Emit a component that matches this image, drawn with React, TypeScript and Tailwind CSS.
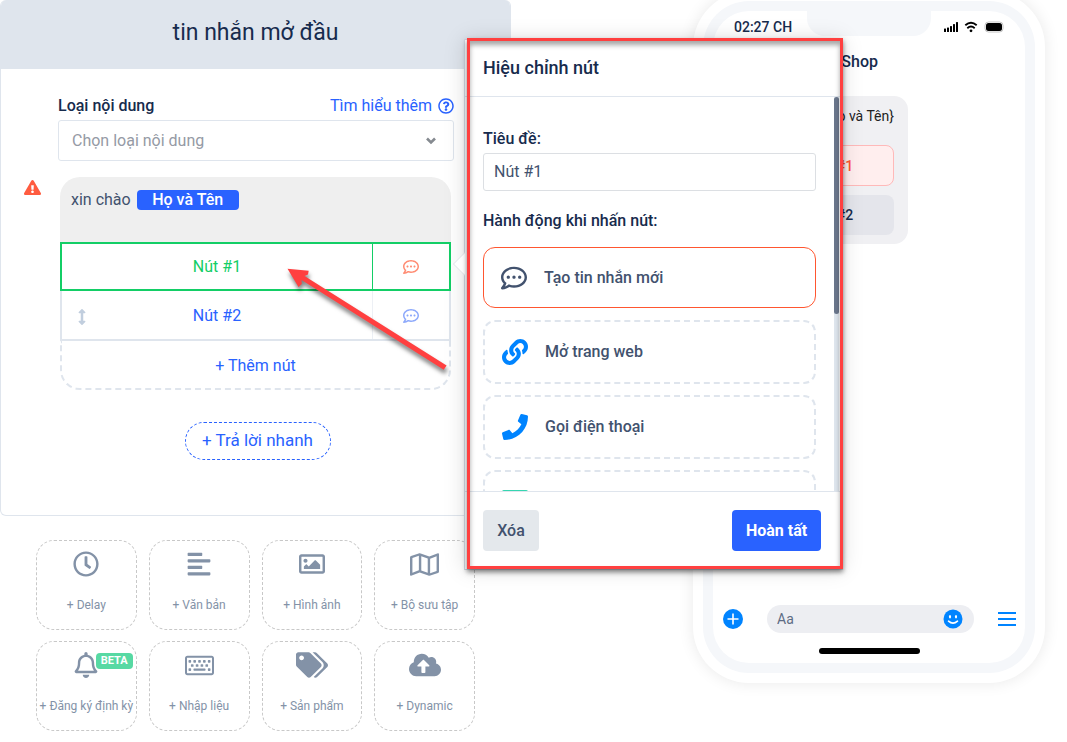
import React from "react";
import {
  FaAlignLeft,
  FaArrowsAltV,
  FaCloudUploadAlt,
  FaExclamationTriangle,
  FaLink,
  FaPhone,
  FaRegBell,
  FaRegClock,
  FaRegCommentDots,
  FaRegImage,
  FaRegKeyboard,
  FaRegMap,
  FaRegQuestionCircle,
  FaTags,
} from "react-icons/fa";

const blocks = [
  { label: "+ Delay", icon: <FaRegClock size={26} /> },
  { label: "+ Văn bản", icon: <FaAlignLeft size={26} /> },
  { label: "+ Hình ảnh", icon: <FaRegImage size={26} /> },
  { label: "+ Bộ sưu tập", icon: <FaRegMap size={29} /> },
  { label: "+ Đăng ký định kỳ", icon: <FaRegBell size={26} />, beta: true },
  { label: "+ Nhập liệu", icon: <FaRegKeyboard size={29} /> },
  { label: "+ Sản phẩm", icon: <FaTags size={32} /> },
  { label: "+ Dynamic", icon: <FaCloudUploadAlt size={32} /> },
];

function MessageCard() {
  return (
    <section className="flex h-[516px] flex-col overflow-hidden rounded-md border border-t-0 border-[#dfe5ed]">
      <h1 className="flex h-[69px] shrink-0 items-center justify-center bg-[#dfe5ed] pb-0.5 text-[23px] text-[#172b4d]">
        tin nhắn mở đầu
      </h1>
      <div className="flex flex-col px-[57px] pt-6">
        <div className="-mr-px flex h-[27px] items-center justify-between pb-0.5 text-base">
          <label htmlFor="content-type" className="font-medium text-[#172b4d]">
            Loại nội dung
          </label>
          <a href="#learn" className="flex items-center gap-1.5 text-[#2962ff]">
            Tìm hiểu thêm <FaRegQuestionCircle size={16} />
          </a>
        </div>
        <div className="relative -mr-px">
          <select
            id="content-type"
            className="block h-[41px] w-full appearance-none rounded-[3px] border border-[#dfe5ed] bg-white px-[13px] text-base text-[#959aa5]"
          >
            <option>Chọn loại nội dung</option>
          </select>
          <svg className="pointer-events-none absolute top-[17px] right-[17px] h-2 w-3" viewBox="0 0 12 8" fill="none">
            <path d="M2 1.5 6 5.5 10 1.5" stroke="#858a90" strokeWidth="2.6" />
          </svg>
        </div>

        <div className="relative mt-4 mr-0.5 ml-0.5">
          <FaExclamationTriangle size={17} color="#ff5c40" className="absolute top-0.5 -left-9" />
          <div className="flex h-[65px] items-start gap-1.5 rounded-t-[20px] bg-[#efefef] px-[11px] pt-[13px] text-base leading-5 text-[#42526e]">
            <span>xin chào</span>
            <span className="w-[102px] rounded bg-[#2962ff] text-center font-medium text-white">Họ và Tên</span>
          </div>
          <div className="flex h-[49px] border-2 border-[#13ce66] text-base">
            <button className="flex-1 text-[#13ce66]">Nút #1</button>
            <button aria-label="Hành động nút 1" className="flex w-[77px] items-center justify-center border-l border-[#13ce66] text-[#ff8c73]">
              <FaRegCommentDots size={16} />
            </button>
          </div>
          <div className="flex h-[50px] border-2 border-t-0 border-[#dfe5ed] text-base">
            <button className="relative flex-1 pt-0.5 text-[#2962ff]">
              <FaArrowsAltV size={16} color="#c1cede" className="absolute top-[18px] left-3" />
              Nút #2
            </button>
            <button aria-label="Hành động nút 2" className="flex w-[77px] items-center justify-center border-l border-[#edf0f5] pt-0.5 text-[#8da9fb]">
              <FaRegCommentDots size={16} />
            </button>
          </div>
          <button className="h-[49px] w-full rounded-b-[20px] border-2 border-t-0 border-dashed border-[#dfe5ed] pt-0.5 text-base text-[#2962ff]">
            + Thêm nút
          </button>
        </div>
        <div className="mt-8 flex justify-center pl-1">
          <button className="h-[38px] w-[146px] rounded-full border border-dashed border-[#2962ff] text-[17px] text-[#2962ff]">
            + Trả lời nhanh
          </button>
        </div>
      </div>
    </section>
  );
}

function BlockGrid() {
  return (
    <div className="mt-6 grid grid-cols-4 gap-x-3 gap-y-[11px] px-9">
      {blocks.map((b) => (
        <button
          key={b.label}
          className="relative flex h-[90px] flex-col items-center rounded-[18px] border border-dashed border-[#c8c8c8] text-xs text-[#8392a7]"
        >
          <span className="flex h-[46px] items-center">{b.icon}</span>
          <span className="mt-2.5 whitespace-nowrap">{b.label}</span>
          {b.beta && (
            <span className="absolute top-[11px] right-[3px] rounded bg-[#57d9a3] px-[5px] text-[11px] leading-4 font-bold text-white">
              BETA
            </span>
          )}
        </button>
      ))}
    </div>
  );
}

function Phone() {
  return (
    <aside className="-mt-[9px] mr-[22px] ml-auto h-[692px] w-[352px] shrink-0 rounded-[56px] bg-white p-2.5 shadow-[0_0_16px_rgba(0,0,0,0.09)]">
      <div className="h-full rounded-[46px] bg-[#f5f7fa] p-2.5">
        <div className="relative flex h-full flex-col rounded-[36px] bg-white">
          <div className="absolute top-0 left-[94px] h-[25px] w-[124px] rounded-b-[18px] bg-[#f5f7fa]" />
          <div className="flex h-8 items-center justify-between px-[21px] text-sm font-medium text-[#172b4d]">
            <span>02:27 CH</span>
            <svg width="60" height="12" viewBox="0 0 60 12">
              <g fill="#000">
                <rect x="0" y="7.500" width="2" height="3.500" rx="0.500" />
                <rect x="3" y="6.500" width="2" height="4.500" rx="0.500" />
                <rect x="6" y="5" width="2" height="6" rx="0.500" />
                <rect x="9" y="3" width="2" height="8" rx="0.500" />
                <rect x="12" y="1" width="2" height="10" rx="0.500" />
                <rect x="42" y="2" width="16" height="8" rx="2.500" />
                <circle cx="27" cy="9.800" r="1.400" />
              </g>
              <path d="M21.300 4.300q5.700-5 11.400 0M23.300 7.200q3.700-3.200 7.400 0" fill="none" stroke="#000" strokeWidth="1.900" />
              <rect x="41" y="1" width="18" height="10" rx="3.500" fill="none" stroke="#aaa" strokeWidth="0.700" />
            </svg>
          </div>
          <div className="flex h-[37px] items-center justify-end pr-[147px] text-base font-medium text-[#172b4d]">Shop</div>
          <div className="mt-4 ml-[43px] flex h-[148px] w-[152px] flex-col items-end rounded-[14px] bg-[#f0f0f3] px-3.5 pt-2.5 text-sm">
            <p className="whitespace-nowrap text-[#222]">xin chào {"{Họ và Tên}"}</p>
            <button className="mt-[19px] h-[41px] w-full shrink-0 rounded-lg border border-[#ffb9b9] bg-[#ffeeee] font-medium text-[#ff5630]">Nút #1</button>
            <button className="mt-[9px] h-10 w-full shrink-0 rounded-lg bg-[#e4e5eb] font-medium text-[#172b4d]">Nút #2</button>
          </div>
          <div className="mt-auto flex items-center pr-[9px] pl-2.5">
            <button aria-label="Thêm" className="mr-6">
              <svg width="20" height="20" viewBox="0 0 20 20">
                <circle cx="10" cy="10" r="10" fill="#0084ff" />
                <path d="M4.500 10h11M10 4.500v11" stroke="#fff" strokeWidth="1.600" />
              </svg>
            </button>
            <div className="mr-6 flex h-7 min-w-0 flex-1 items-center rounded-full bg-[#edeef2] pr-[11px] pl-2.5">
              <input aria-label="Tin nhắn" placeholder="Aa" className="min-w-0 flex-1 bg-transparent text-sm outline-none placeholder:text-[#5e6c84]" />
              <svg className="shrink-0" width="20" height="20" viewBox="0 0 20 20">
                <circle cx="10" cy="10" r="9.500" fill="#0084ff" />
                <g fill="#fff">
                  <ellipse cx="7" cy="7.800" rx="1.100" ry="1.700" />
                  <ellipse cx="13" cy="7.800" rx="1.100" ry="1.700" />
                </g>
                <path d="M5.500 12.200q4.500 4 9 0" fill="none" stroke="#fff" strokeWidth="1.600" strokeLinecap="round" />
              </svg>
            </div>
            <button aria-label="Menu" className="w-[18px] shrink-0">
              <svg width="18" height="14" viewBox="0 0 18 14" fill="#0084ff">
                <path d="M0 0h18v2H0zM0 6h18v2H0zM0 12h18v2H0z" />
              </svg>
            </button>
          </div>
          <div className="mx-auto mt-[15px] mb-[9px] h-1.5 w-[101px] rounded-full bg-black" />
        </div>
      </div>
    </aside>
  );
}

function Option({ icon, label }: { icon: React.ReactNode; label: string }) {
  return (
    <button className="flex h-16 shrink-0 items-center gap-[17px] rounded-xl border-2 border-dashed border-[#dfe5ed] pl-[17px] text-base font-medium text-[#42526e]">
      {icon}
      {label}
    </button>
  );
}

function EditPopup() {
  return (
    <div role="dialog" aria-labelledby="popup-title" className="absolute top-[39px] left-[464px] flex h-[531px] w-[379px] flex-col border border-r-0 border-[#cdd4df] bg-white shadow-[0_0_20px_rgba(0,0,0,0.13)]">
      <svg className="absolute top-[212px] -left-3 h-6 w-3" viewBox="0 0 12 24" fill="none">
        <path d="M12 0.500.500 12 12 23.500" fill="#fff" stroke="#dfe3e8" />
      </svg>
      <div className="flex h-[57px] shrink-0 items-center border-b border-[#dfe5ed] pl-[18px]">
        <h2 id="popup-title" className="text-lg font-medium text-[#172b4d]">Hiệu chỉnh nút</h2>
      </div>
      <div className="flex min-h-0 flex-1">
        <div className="flex flex-1 flex-col overflow-hidden px-[18px]">
          <label htmlFor="button-title" className="mt-[30px] text-base font-medium text-[#172b4d]">Tiêu đề:</label>
          <input
            id="button-title"
            defaultValue="Nút #1"
            className="mt-0.5 h-[38px] shrink-0 rounded-[3px] border border-[#dcdfe3] px-2.5 pb-0.5 text-base text-[#42526e] outline-none"
          />
          <p className="mt-[18px] text-base font-medium text-[#172b4d]">Hành động khi nhấn nút:</p>
          <div className="mt-3.5 flex flex-col gap-[11px]">
            <button className="mb-px flex h-[61px] shrink-0 items-center gap-[17px] rounded-xl border border-[#ff5630] pl-[17px] text-base font-medium text-[#42526e]">
              <FaRegCommentDots size={26} />
              Tạo tin nhắn mới
            </button>
            <Option icon={<FaLink size={26} color="#0084ff" />} label="Mở trang web" />
            <Option icon={<FaPhone size={26} color="#0084ff" />} label="Gọi điện thoại" />
            <Option icon={<span className="h-6 w-[26px] rounded-xs bg-[#36d6b0]" />} label="" />
          </div>
        </div>
        <div className="mr-1 w-[5px] bg-[#dfe6ee]">
          <div className="h-[217px] rounded-full bg-[#6b778c]" />
        </div>
      </div>
      <div className="flex h-[78px] shrink-0 items-center justify-between border-t border-[#dfe5ed] pr-[22px] pl-[18px]">
        <button className="h-[41px] w-14 rounded bg-[#e4e8ec] text-base font-medium text-[#42526e]">Xóa</button>
        <button className="h-[41px] w-[89px] rounded bg-[#2962ff] text-base font-bold text-white">Hoàn tất</button>
      </div>
      <div className="pointer-events-none absolute -top-0.5 right-0 bottom-0 left-0.5 border-3 border-[#ff4040] shadow-[0_3px_5px_rgba(0,0,0,0.5),inset_0_4px_5px_rgba(0,0,0,0.35)]" />
    </div>
  );
}

export default function App() {
  return (
    <main className="relative min-h-screen overflow-hidden bg-white font-[Roboto,sans-serif]">
      <div className="flex">
        <div className="w-[511px] shrink-0">
          <MessageCard />
          <BlockGrid />
        </div>
        <Phone />
      </div>
      <EditPopup />
      <svg className="pointer-events-none absolute top-[260px] left-[280px] overflow-visible drop-shadow-[1px_4px_2px_rgba(0,0,0,0.5)]" width="172" height="120" viewBox="280 260 172 120">
        <path d="M287.500 268.700 308.700 270.700 308 274.500 304.500 276 446.600 365.500 443.700 369.700 301.500 280 301.800 284 298.500 287Z" fill="#ff4040" />
      </svg>
    </main>
  );
}
